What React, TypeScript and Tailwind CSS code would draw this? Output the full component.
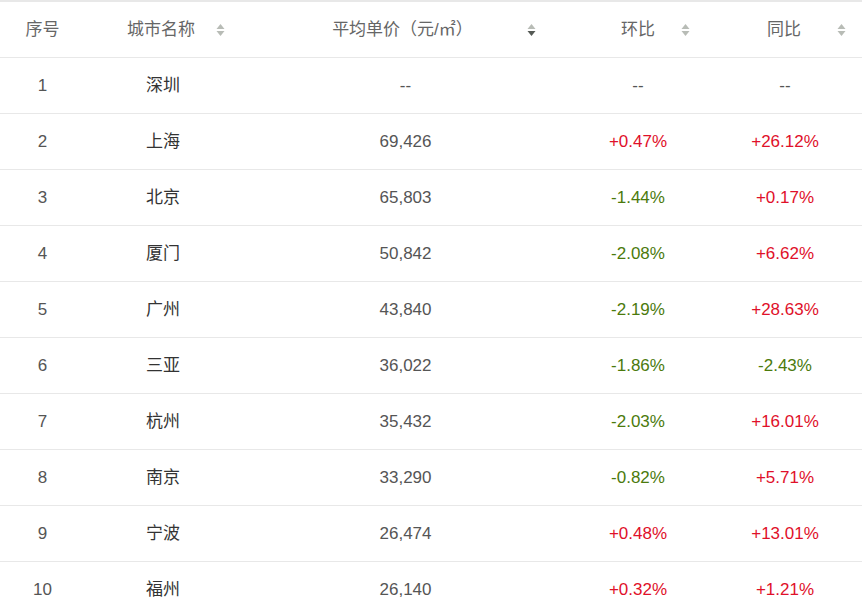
import React from 'react';

type Row = { id: number; city: string; price: string; mom: string; yoy: string };

const rows: Row[] = [
  { id: 1, city: '深圳', price: '--', mom: '--', yoy: '--' },
  { id: 2, city: '上海', price: '69,426', mom: '+0.47%', yoy: '+26.12%' },
  { id: 3, city: '北京', price: '65,803', mom: '-1.44%', yoy: '+0.17%' },
  { id: 4, city: '厦门', price: '50,842', mom: '-2.08%', yoy: '+6.62%' },
  { id: 5, city: '广州', price: '43,840', mom: '-2.19%', yoy: '+28.63%' },
  { id: 6, city: '三亚', price: '36,022', mom: '-1.86%', yoy: '-2.43%' },
  { id: 7, city: '杭州', price: '35,432', mom: '-2.03%', yoy: '+16.01%' },
  { id: 8, city: '南京', price: '33,290', mom: '-0.82%', yoy: '+5.71%' },
  { id: 9, city: '宁波', price: '26,474', mom: '+0.48%', yoy: '+13.01%' },
  { id: 10, city: '福州', price: '26,140', mom: '+0.32%', yoy: '+1.21%' },
];

const cols = 'grid grid-cols-[85px_156px_329px_136px_156px]';

function SortIcon({ desc = false }: { desc?: boolean }) {
  return (
    <svg width="9" height="13" viewBox="0 0 9 13" className="block">
      <path d="M4.5 0.5 L8.5 5.5 L0.5 5.5 Z" fill="#b8bcb6" />
      <path d="M4.5 12.5 L8.5 7.5 L0.5 7.5 Z" fill={desc ? '#555a55' : '#b8bcb6'} />
    </svg>
  );
}

function tone(v: string) {
  if (v.startsWith('+')) return 'text-[#e0102a]';
  if (v.startsWith('-') && v !== '--') return 'text-[#4b7a0c]';
  return 'text-[#555]';
}

export default function App() {
  return (
    <div className="w-[864px] h-[615px] overflow-hidden bg-white font-['Liberation_Sans','Noto_Sans_CJK_SC',sans-serif] text-[17px]">
      <div className="w-[862px] border-t-2 border-[#e8e8e8]">
        {/* Header */}
        <div className={`${cols} h-[56px] border-b border-[#e8e8e8] text-[#666]`}>
          <div className="flex items-center justify-center">序号</div>
          <div className="relative flex items-center justify-center pr-[4px]">
            城市名称
            <span className="absolute right-[16px] top-1/2 -translate-y-1/2"><SortIcon /></span>
          </div>
          <div className="relative flex items-center justify-center pr-[6px]">
            平均单价（元/㎡）
            <span className="absolute right-[34px] top-1/2 -translate-y-1/2"><SortIcon desc /></span>
          </div>
          <div className="relative flex items-center justify-center">
            环比
            <span className="absolute right-[16px] top-1/2 -translate-y-1/2"><SortIcon /></span>
          </div>
          <div className="relative flex items-center justify-center">
            同比
            <span className="absolute right-[16px] top-1/2 -translate-y-1/2"><SortIcon /></span>
          </div>
        </div>

        {/* Body */}
        {rows.map((r) => (
          <div key={r.id} className={`${cols} h-[56px] border-b border-[#e8e8e8]`}>
            <div className="flex items-center justify-center text-[#555]">{r.id}</div>
            <div className="flex items-center justify-center text-[#333]">{r.city}</div>
            <div className="flex items-center justify-center text-[#555]">{r.price}</div>
            <div className={`flex items-center justify-center ${tone(r.mom)}`}>{r.mom}</div>
            <div className={`flex items-center justify-center pl-[2px] ${tone(r.yoy)}`}>{r.yoy}</div>
          </div>
        ))}
      </div>
    </div>
  );
}
